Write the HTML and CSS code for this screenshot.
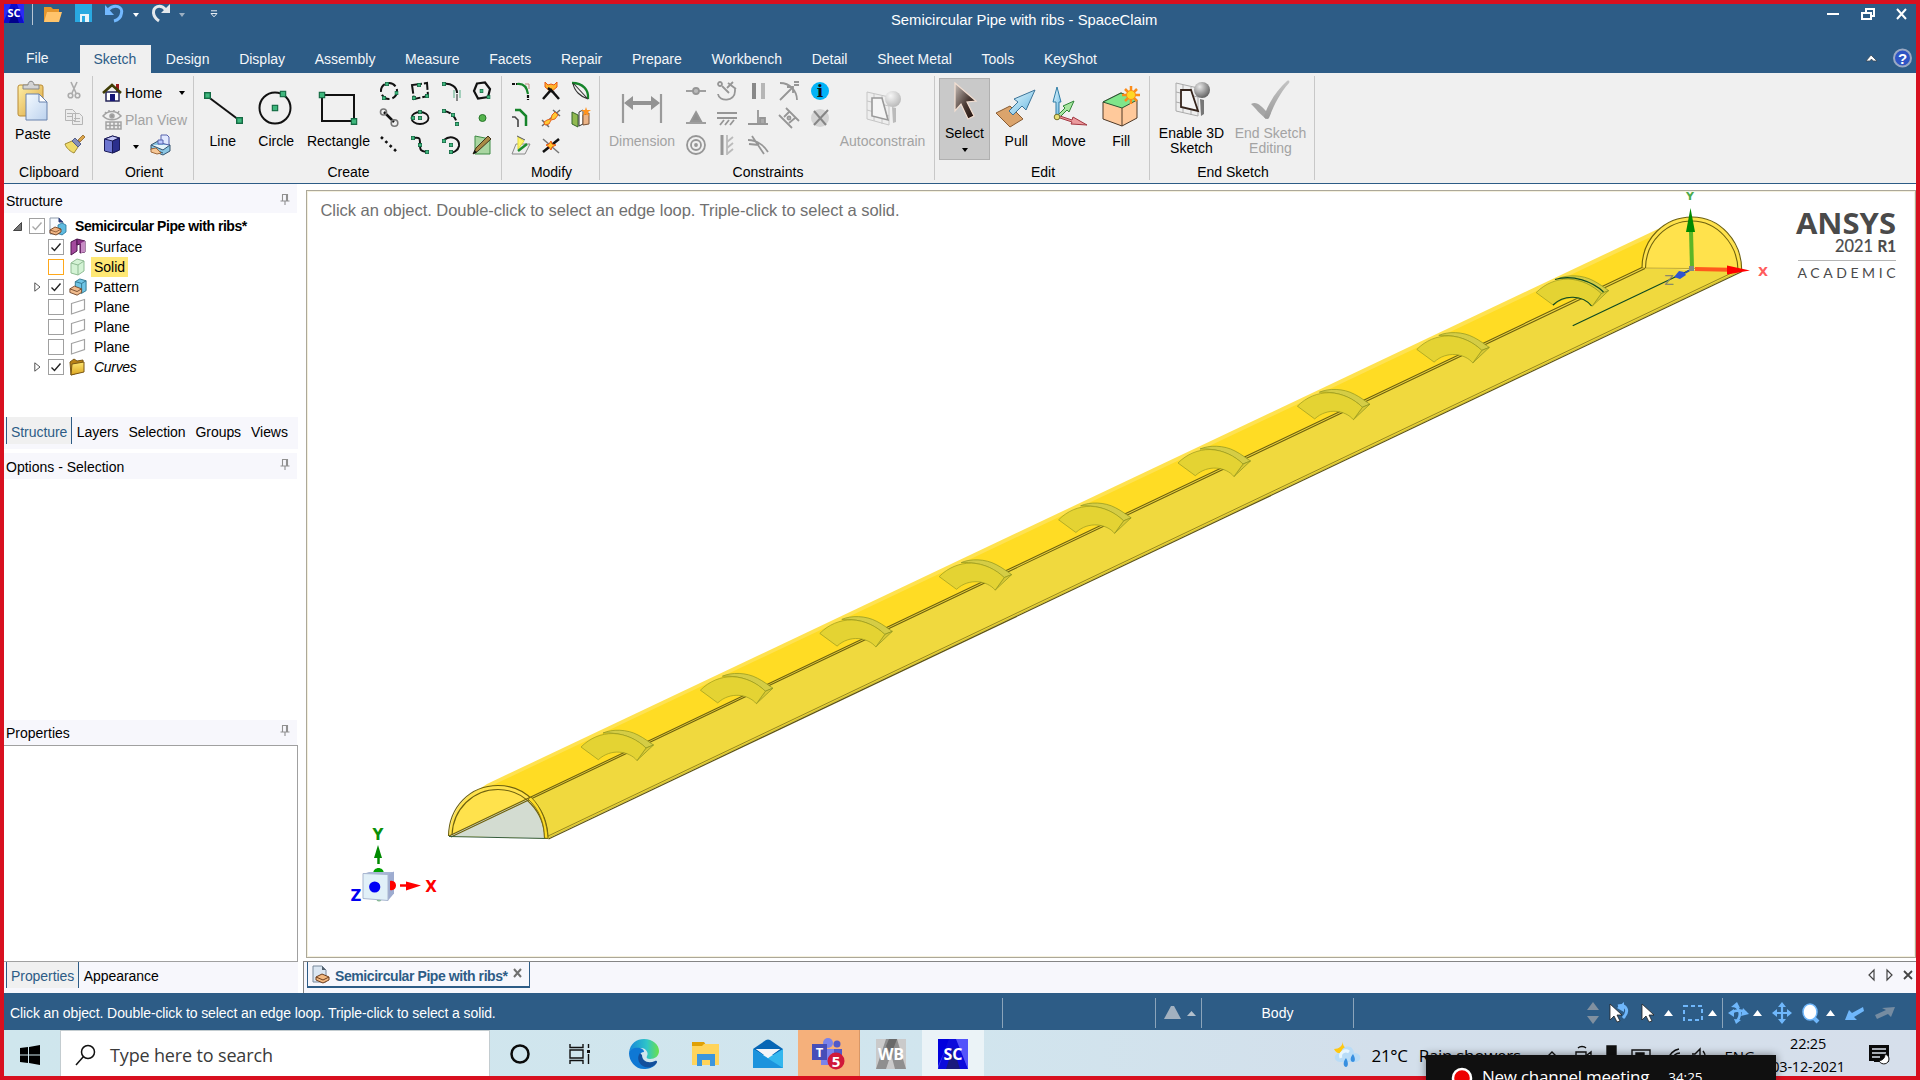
FILE: index.html
```html
<!DOCTYPE html>
<html lang="en">
<head>
<meta charset="utf-8">
<title>Semicircular Pipe with ribs - SpaceClaim</title>
<link rel="stylesheet" href="styles.css">
</head>
<body>
<svg class="sprite" width="0" height="0">
  <defs>
    <linearGradient id="gGold" x1="0" y1="0" x2="1" y2="1"><stop offset="0" stop-color="#fff0a8"/><stop offset="1" stop-color="#d9a23a"/></linearGradient>
    <linearGradient id="gPaper" x1="0" y1="0" x2="1" y2="1"><stop offset="0" stop-color="#f4faff"/><stop offset="1" stop-color="#bcd2ee"/></linearGradient>
    <linearGradient id="gFolder" x1="0" y1="0" x2="0" y2="1"><stop offset="0" stop-color="#ffe873"/><stop offset="1" stop-color="#dba520"/></linearGradient>
    <linearGradient id="gArrow" x1="0" y1="0" x2="1" y2="1"><stop offset="0" stop-color="#e8fbff"/><stop offset="1" stop-color="#63b4e0"/></linearGradient>
    <linearGradient id="gCursor" x1="0" y1="0" x2="1" y2="1"><stop offset="0" stop-color="#c9c0bb"/><stop offset=".55" stop-color="#4b3b35"/><stop offset="1" stop-color="#1c0a04"/></linearGradient>
    <radialGradient id="gBulb" cx=".35" cy=".3" r=".8"><stop offset="0" stop-color="#e8e8e8"/><stop offset="1" stop-color="#555"/></radialGradient>
    <radialGradient id="gBulbOff" cx=".35" cy=".3" r=".8"><stop offset="0" stop-color="#f6f6f6"/><stop offset="1" stop-color="#b4b4b4"/></radialGradient>
    <linearGradient id="gCheck" x1="0" y1="0" x2="0" y2="1"><stop offset="0" stop-color="#c4c4c4"/><stop offset="1" stop-color="#9a9a9a"/></linearGradient>
  </defs>
  <symbol id="part" viewBox="0 0 18 19">
    <path d="M1 1h9l4 4v12H1z" fill="#f7fbff" stroke="#8f9baa"/><path d="M10 1v4h4" fill="#2a3d7c" stroke="#2a3d7c"/>
    <path d="M9 8l4-2 4 2v7l-4 3-4-2z" fill="#5fbbe0" stroke="#24749b" stroke-width=".8"/>
    <path d="M1 13l5-3 6 2v3l-5 3-6-2z" fill="#f0b584" stroke="#6f3f1f" stroke-width=".9"/><path d="M1 13l6 2 5-3" fill="none" stroke="#6f3f1f" stroke-width=".7"/>
  </symbol>
  <symbol id="plane" viewBox="0 0 18 18"><path d="M2.500 5.500L15.500 1.500V11.500L2.500 16z" fill="#fff" stroke="#a2a2a2" stroke-width="1.200"/></symbol>
  <symbol id="pin" viewBox="0 0 10 12"><path d="M2 .5h5.500v6M2.500 .5v6M6.500 .5v6M.5 7h9M5 7v4" fill="none" stroke="#909090" stroke-width="1.100"/></symbol>
  <symbol id="rib" viewBox="-2 -20 80 40" overflow="visible">
    <path d="M22-14C31-18 46-18 57-12C63-9 68-5 72.500-2L65 1C55-8 42-15 22-14z" fill="#d5cd45" stroke="#8c9420" stroke-width=".7"/>
    <path d="M72.500-2L65 1L56 13.500z" fill="#d8c836" stroke="#8c9420" stroke-width=".7"/>
    <path d="M0 0C9-9 20-13.500 32-13.500C45-13 57-7 65 1L56 13.500C48 4 30 1 17.300 12.700z" fill="#e4d333" stroke="#9a9a20" stroke-width=".7"/>
  </symbol>
  <symbol id="check" viewBox="0 0 14 14"><path d="M2.500 7.500L5.500 10.500L11.500 3.500" fill="none" stroke="currentColor" stroke-width="1.400"/></symbol>
  <symbol id="dot" viewBox="0 0 4 4"><rect x=".4" y=".4" width="3.200" height="3.200" fill="#3fb77d" stroke="#146b44" stroke-width=".8"/></symbol>
</svg>

<div class="window">
  <header class="titlebar">
    <div class="quick">
      <svg class="app" width="20" height="19" viewBox="0 0 20 19"><path fill="#0d0dcc" d="M0 0h20v19H0z"/><path fill="#2a2af5" d="M0 0h7L0 17zM13 0h7v19z"/><path fill="#00008c" d="M10 3l5 16H5z"/><text x="10" y="13" class="logo-s">SC</text></svg>
      <i class="q-sep"></i>
      <svg class="folder" width="20" height="18" viewBox="0 0 20 18"><path d="M1 2h7l2 2h6v13H1z" fill="#e5962c"/><path d="M4 7h15l-3 10H1z" fill="#ffc46b"/></svg>
      <svg class="save" width="18" height="18" viewBox="0 0 18 18"><path d="M0 0h17v18H0z" fill="#29a9e1"/><path d="M5 10h9v8H5z" fill="#e8f4fa"/><path d="M7 12h3v6H7z" fill="#29a9e1"/></svg>
      <svg class="undo" width="20" height="19" viewBox="0 0 20 19"><path d="M3 6C10-1 18 3 16.500 9C16 13 13 16 9 17" fill="none" stroke="#73b9ff" stroke-width="3"/><path d="M0 1v10h9z" fill="#73b9ff"/></svg>
      <i class="caret white"></i>
      <svg class="redo" width="20" height="19" viewBox="0 0 20 19"><path d="M15 6C9-1 2 3 2.500 9C3 13 5 15 8 17" fill="none" stroke="#e4e8ec" stroke-width="3"/><path d="M19 0v9h-9z" fill="#e4e8ec"/></svg>
      <i class="caret dim"></i>
      <svg class="custom" width="8" height="8" viewBox="0 0 8 8"><path d="M1 .8h6M1 3.500h6L4 6.800z" fill="none" stroke="#e8eef4"/></svg>
    </div>
    <div class="title">Semicircular Pipe with ribs - SpaceClaim</div>
    <svg class="controls" width="84" height="16" viewBox="0 0 84 16" fill="none" stroke="#fff" stroke-width="2"><path d="M0 8h12"/><path d="M35 7h9v6h-9zM39 6V3h8v7h-3"/><path d="M70 3l9 10M79 3l-9 10"/></svg>
  </header>

  <nav class="tabs">
    <span class="file">File</span><span class="active">Sketch</span><span>Design</span><span>Display</span><span>Assembly</span><span>Measure</span><span>Facets</span><span>Repair</span><span>Prepare</span><span>Workbench</span><span>Detail</span><span>Sheet Metal</span><span>Tools</span><span>KeyShot</span>
    <svg class="help" width="50" height="22" viewBox="0 0 50 22"><path d="M2 14L7 8L13 14H9L7.500 12L6 14z" fill="#fff" stroke="#3b4754" stroke-width=".8"/><circle cx="38.500" cy="11" r="8.500" fill="#2f55c4" stroke="#9aa9c4" stroke-width="2"/><text x="38.500" y="16.500" class="qmark">?</text></svg>
  </nav>

  <section class="ribbon">
    <div class="group clip">
      <div class="body">
        <div class="big paste">
          <svg width="32" height="42" viewBox="0 0 32 42"><rect x="1" y="5" width="25" height="31" rx="2" fill="url(#gGold)" stroke="#b98a35"/><path d="M6 9V5h5c0-5 6-5 6 0h5v4z" fill="#d4d4d4" stroke="#888"/><path d="M9 14h13l8 8v18H9z" fill="url(#gPaper)" stroke="#6982ad"/><path d="M22 14v8h8z" fill="#fff" stroke="#6982ad"/></svg>
          <span>Paste</span>
        </div>
        <div class="stack">
          <svg width="20" height="20" viewBox="0 0 20 20" fill="none" stroke="#ababab" stroke-width="1.600"><path d="M7 2l5 11M13 2L8 13"/><circle cx="6.500" cy="15.500" r="2.300"/><circle cx="13.500" cy="15.500" r="2.300"/></svg>
          <svg width="20" height="20" viewBox="0 0 20 20" fill="#ececec" stroke="#b5b5b5"><path d="M1.500 2.500h7l3 3v8h-10zM8.500 6.500h7l3 3v8h-10zM10 11.500h6M10 14.500h6M3 6.500h5M3 9.500h5"/></svg>
          <svg width="22" height="20" viewBox="0 0 22 20"><path d="M1 10l7-3 6 6-4 6c-3-1-8-5-9-9z" fill="#efdc6a" stroke="#a08a35"/><path d="M8 7l3-3 6 6-3 3z" fill="#8590b8" stroke="#555f8a"/><path d="M14 6l5-5 2 2-5 5z" fill="#dca64b" stroke="#916427" stroke-width=".8"/></svg>
        </div>
      </div>
      <div class="label">Clipboard</div>
    </div>

    <div class="group orient">
      <div class="rows">
        <div><svg width="20" height="20" viewBox="0 0 20 20"><path d="M14 1h3v8h-3z" fill="#9b1b1b"/><path d="M4 9h13v9H4z" fill="#fff" stroke="#26265a" stroke-width="1.500"/><path d="M1 10L10 2l9 8" fill="none" stroke="#403d06" stroke-width="2.600"/><path d="M8 11h5v7H8z" fill="#151577"/></svg><span>Home</span><i class="caret black"></i></div>
        <div class="off"><svg width="20" height="20" viewBox="0 0 20 20" fill="none" stroke="#a2a2a2" stroke-width="1.500"><path d="M1 6c5-6 13-6 18 0-5 5-13 5-18 0zM3 2l1 1M7 0v2M12 0v2M17 1l-1 2"/><circle cx="10" cy="6" r="2" fill="#999"/><path d="M4 12h15v7H4zM4 15.500h15M8 12v7M12 12v7M16 12v7"/></svg><span>Plan View</span></div>
        <div class="third"><svg width="20" height="20" viewBox="0 0 20 20" stroke="#1b1b58"><path d="M2.500 4l8-3 7 2v12l-7 3-8-2z" fill="#6d76d0"/><path d="M2.500 4l8 2 7-3-7-2z" fill="#c3c7f6"/><path d="M10.500 6l7-3v12l-7 3z" fill="#2b2f8d"/></svg><i class="caret black"></i><svg width="22" height="22" viewBox="0 0 22 22" stroke="#35546f"><path d="M2 11l7-4 12 4v6l-7 4-12-5z" fill="#8bc6e4"/><path d="M2 11l12 5 7-5M2 14l12 5" fill="#e5f4fb"/><path d="M2 15l5-1 5 5-4 1-6-2z" fill="#f6c796" stroke="#a06a3c"/><path d="M12 1h6l2 2v8l-8-2z" fill="#e0e8ff" stroke="#5662ad"/><path d="M9 6h5v4H9z" fill="#bccaff" stroke="#5662ad"/></svg></div>
      </div>
      <div class="label">Orient</div>
    </div>

    <div class="group create">
      <div class="body">
        <div class="big low w54"><svg width="42" height="38" viewBox="0 0 42 38"><path d="M5 7l32 24" stroke="#111" stroke-width="2"/><use href="#dot" x="2" y="3" width="7" height="7"/><use href="#dot" x="34" y="28" width="7" height="7"/></svg><span>Line</span></div>
        <div class="big low w54"><svg width="42" height="38" viewBox="0 0 42 38"><circle cx="20" cy="19" r="15.500" fill="none" stroke="#111" stroke-width="2"/><use href="#dot" x="16.500" y="15.500" width="7" height="7"/><use href="#dot" x="24.500" y="1.500" width="7" height="7"/></svg><span>Circle</span></div>
        <div class="big low w70"><svg width="42" height="38" viewBox="0 0 42 38"><path d="M4 6h32v26H4z" fill="none" stroke="#111" stroke-width="2"/><use href="#dot" x=".5" y="2.500" width="7" height="7"/><use href="#dot" x="32.500" y="29" width="7" height="7"/></svg><span>Rectangle</span></div>
        <div class="grid c4">
          <svg viewBox="0 0 20 20"><circle cx="10" cy="10" r="8" fill="none" stroke="#111" stroke-width="2" stroke-dasharray="9 3"/><use href="#dot" x="6" y="1" width="4" height="4"/><use href="#dot" x="15.500" y="10" width="4" height="4"/><use href="#dot" x="3" y="15" width="4" height="4"/></svg>
          <svg viewBox="0 0 20 20"><path d="M2 4l15-2 1 13-14 3z" fill="none" stroke="#111" stroke-width="2" stroke-dasharray="10 2"/><use href="#dot" x="7" y="2" width="4" height="4"/><use href="#dot" x="15" y="13" width="4" height="4"/><use href="#dot" x="2" y="15" width="4" height="4"/></svg>
          <svg viewBox="0 0 20 20"><path d="M3 3c7-1 13 3 13 9" fill="none" stroke="#111" stroke-width="2"/><path d="M13 9v8M19 9v8" stroke="#58ae87"/><path d="M16 13v7" stroke="#888" stroke-width="2"/><use href="#dot" x="1" y="1" width="4" height="4"/></svg>
          <svg viewBox="0 0 20 20"><path d="M5 2.500L13 1.500L18 8L16 16L6 17.500L2 10z" fill="none" stroke="#111" stroke-width="2.200"/><use href="#dot" x="7.500" y="8" width="4" height="4"/><use href="#dot" x="14.500" y="14" width="4" height="4"/></svg>
          <svg viewBox="0 0 20 20"><path d="M5 4l10 10" stroke="#111" stroke-width="2.500"/><circle cx="4.500" cy="4" r="3" fill="none" stroke="#777" stroke-width="1.600"/><circle cx="15.500" cy="15" r="3.300" fill="none" stroke="#777" stroke-width="1.600"/></svg>
          <svg viewBox="0 0 20 20"><ellipse cx="10" cy="10" rx="8.500" ry="6" fill="none" stroke="#111" stroke-width="1.800"/><use href="#dot" x="8" y="8" width="4" height="4"/><use href="#dot" x="8" y="2" width="4" height="4"/><use href="#dot" x="1" y="8" width="4" height="4"/></svg>
          <svg viewBox="0 0 20 20"><path d="M3 3c7 1 12 6 13 13" fill="none" stroke="#111" stroke-width="2" stroke-dasharray="7 2"/><use href="#dot" x="1" y="1" width="4" height="4"/><use href="#dot" x="10" y="5" width="4" height="4"/><use href="#dot" x="14" y="14" width="4" height="4"/></svg>
          <svg viewBox="0 0 20 20"><circle cx="10.500" cy="10" r="3.500" fill="#55b44d" stroke="#277729"/></svg>
          <svg viewBox="0 0 20 20"><path d="M2 2l16 15" stroke="#111" stroke-width="2.600" stroke-dasharray="2.600 3.400"/></svg>
          <svg viewBox="0 0 20 20"><path d="M3 3c7-1 7 0 7 6s0 7 7 8" fill="none" stroke="#111" stroke-width="2"/><use href="#dot" x="1" y="1" width="4" height="4"/><use href="#dot" x="8" y="8" width="4" height="4"/><use href="#dot" x="15" y="15" width="4" height="4"/></svg>
          <svg viewBox="0 0 20 20"><path d="M3 5c7-6 16-1 15 6-1 5-6 7-9 6" fill="none" stroke="#111" stroke-width="2"/><use href="#dot" x="1" y="4" width="4" height="4"/><use href="#dot" x="8" y="8" width="4" height="4"/><use href="#dot" x="8" y="15" width="4" height="4"/></svg>
          <svg viewBox="0 0 20 20"><path d="M3 1l15 3v15H3z" fill="#a9d6a1" stroke="#3e8b45"/><path d="M16 1l3 3L6 16l-5 3 3-6z" fill="#a98a45" stroke="#43351d"/><path d="M1 19l1.500-4 2.500 2.500z" fill="#111"/></svg>
        </div>
      </div>
      <div class="label">Create</div>
    </div>

    <div class="group modify">
      <div class="grid c3">
        <svg viewBox="0 0 20 20" fill="none"><path d="M1 3h5" stroke="#111" stroke-width="2" stroke-dasharray="3 1"/><path d="M6 3c7-1 10 4 11 10" stroke="#15842a" stroke-width="2.200"/><path d="M17 14v5" stroke="#111" stroke-width="2.200" stroke-dasharray="3 1"/><path d="M14 3h4v5" stroke="#c08a80"/></svg>
        <svg viewBox="0 0 20 20"><path d="M4 1l3 3 3-1 3 1 3-3v5l-6 5-6-5z" fill="#ffb52b" stroke="#ea5815"/><path d="M2 18L10 9l8 9M7 7l6 5" fill="none" stroke="#111" stroke-width="2.500"/></svg>
        <svg viewBox="0 0 20 20" fill="none"><path d="M1 2c11 0 17 7 16 16" stroke="#15842a" stroke-width="2.300"/><path d="M2 2c1 8 8 14 15 16M3 3l13 14" stroke="#333" stroke-width="1.100"/></svg>
        <svg viewBox="0 0 20 20" fill="none"><path d="M1 9h3l3 3v7" stroke="#444" stroke-width="1.600"/><path d="M4 2h5l6 6v10" stroke="#15842a" stroke-width="2.500"/></svg>
        <svg viewBox="0 0 20 20"><path d="M1 18L19 2M1 12l7 7M12 2l7 6" stroke="#6b6b6b" stroke-width="1.500"/><path d="M3 14l3-2 4-1 1-4 3-3 3 3-3 4-4 1-2 4-4 1z" fill="#ffca35" stroke="#e8641c"/></svg>
        <svg viewBox="0 0 20 20"><path d="M1 4l6 3v12l-6-3z" fill="#91b950" stroke="#35642a"/><path d="M8 4l4-2v14l-4 2z" fill="#fff" stroke="#333"/><path d="M12 7l6-2v11l-6 1z" fill="#ecb487" stroke="#7a5438"/><path d="M15-1l1 3h4l-3 2 1 4-3-2-3 2 1-4-3-2h4z" fill="#ff931e"/></svg>
        <svg viewBox="0 0 20 20"><path d="M5 9h14l-5 10H1z" fill="#eee" stroke="#888"/><path d="M7 2v12l6-8z" fill="#fff46a" stroke="#e3dc36"/><path d="M6 1l8 4" stroke="#555"/><path d="M7 16l9-7" stroke="#1c8d2e" stroke-width="2.500"/></svg>
        <svg viewBox="0 0 20 20"><path d="M2 4l16 14" stroke="#777" stroke-width="1.500"/><path d="M2 17L18 4" stroke="#111" stroke-width="2.500"/><path d="M10 6l1 3 4 1-4 2-1 3-2-3-3-2 3-1z" fill="#ffc62c" stroke="#eb5a16"/></svg>
      </div>
      <div class="label">Modify</div>
    </div>

    <div class="group constraints">
      <div class="body off">
        <div class="big low w66"><svg width="42" height="38" viewBox="0 0 42 38"><path d="M2 5v29M40 5v29" stroke="#9a9a9a" stroke-width="2.200"/><path d="M3 14l9-7v5h18V7l9 7-9 7v-5H12v5z" fill="#939393"/></svg><span>Dimension</span></div>
        <div class="grid c5">
          <svg viewBox="0 0 20 20" class="ln"><path d="M0 10h20"/><circle cx="10" cy="10" r="3" fill="#bbb"/></svg>
          <svg viewBox="0 0 20 20" class="ln"><circle cx="3" cy="3" r="2"/><path d="M5 5l7 7M16 1l-6 6M11 2l8 6M1 13c1 8 17 8 17-3v-2"/></svg>
          <svg viewBox="0 0 20 20"><path d="M6 2v16" stroke="#888" stroke-width="4"/><path d="M15 2v16" stroke="#b6b6b6" stroke-width="4"/></svg>
          <svg viewBox="0 0 20 20" class="ln"><path d="M1 2c10 0 17 8 17 17M1 19L14 6M8 6h6v6M15 1h5M15 4h5"/></svg>
          <svg viewBox="0 0 20 20"><circle cx="10" cy="10" r="9" fill="#02b3f7"/><text x="10" y="16" class="info">i</text></svg>
          <svg viewBox="0 0 20 20" class="ln"><path d="M0 15h20"/><path d="M10 4l5 9H5z" fill="#8f8f8f"/></svg>
          <svg viewBox="0 0 20 20" class="ln"><path d="M0 5h20M0 10h20M7 12l-4 5M12 12l-4 5M17 12l-4 5"/></svg>
          <svg viewBox="0 0 20 20" class="ln"><path d="M10 2v14M0 16h20"/><path d="M12 10h5v6h-5z" fill="#aaa"/></svg>
          <svg viewBox="0 0 20 20" class="ln"><path d="M7 0l13 13M0 7l13 13M5 9l5-5M10 15l6-5"/><circle cx="10" cy="10" r="1.500"/></svg>
          <svg viewBox="0 0 20 20"><circle cx="10" cy="10" r="9" fill="#d3d3d3"/><path d="M4 3l12 14M18 2L4 17" stroke="#858585" stroke-width="2"/></svg>
          <svg viewBox="0 0 20 20" class="ln"><circle cx="10" cy="10" r="9"/><circle cx="10" cy="10" r="5"/><circle cx="10" cy="10" r="1"/></svg>
          <svg viewBox="0 0 20 20" class="ln"><path d="M5 0v20" stroke-width="3"/><path d="M10 0v20M16 2l-6 5M16 8l-6 5M16 14l-6 5" stroke="#bbb"/></svg>
          <svg viewBox="0 0 20 20" class="ln"><path d="M0 5c10 0 17 7 20 12M4 1l12 18M1 9l10 1"/></svg>
        </div>
        <div class="big low w84"><svg width="42" height="38" viewBox="0 0 42 38"><path d="M5 3l22 5v28L5 30zM5 12l22 5M5 21l22 6M12 5v27M20 7v28" fill="#eee" stroke="#c6c6c6"/><path d="M10 9h10l6 22-16-4z" fill="#f5f5f5" stroke="#999" stroke-width="1.600"/><path d="M30 18l4 1v14l-3 1z" fill="#bbb"/><circle cx="31" cy="10" r="8" fill="url(#gBulbOff)"/></svg><span>Autoconstrain</span></div>
      </div>
      <div class="label">Constraints</div>
    </div>

    <div class="group edit">
      <div class="body">
        <div class="big select"><svg width="30" height="40" viewBox="0 0 30 40"><path d="M5 1l21 18-9 1 7 14-6 3-7-15-6 7z" fill="url(#gCursor)" stroke="#f3dfd2" stroke-width="1.200"/></svg><span>Select</span><i class="caret black"></i></div>
        <div class="big low w52"><svg width="42" height="40" viewBox="0 0 42 40"><path d="M1 25l14-7 13 13-13 8z" fill="#dba46c" stroke="#885b31"/><path d="M40 2L31 22l-4-4-9 9-4-4 9-9-4-3z" fill="url(#gArrow)" stroke="#3d7498"/></svg><span>Pull</span></div>
        <div class="big low w52"><svg width="42" height="40" viewBox="0 0 42 40"><path d="M8 28V14H5l4-15 4 15h-2v14" fill="url(#gArrow)" stroke="#2f7da6"/><path d="M11 26l6-6-2-2 11-5-5 11-2-2-6 6" fill="#a7e6a0" stroke="#308538"/><path d="M12 28l12 4 1-3 14 8-16-1 1-2-12-4" fill="#eb9a9d" stroke="#a33842"/><circle cx="9" cy="29" r="2.800" fill="#e8df75" stroke="#75702b"/></svg><span>Move</span></div>
        <div class="big low w52"><svg width="42" height="40" viewBox="0 0 42 40"><path d="M3 14l18-9 16 7v18l-15 8-19-7z" fill="#ffc99b" stroke="#4e3927"/><path d="M3 14l18-9 16 7-15 8z" fill="#7fe58a" stroke="#285634"/><path d="M22 20v18" stroke="#4e3927"/><path d="M31-2v18M22 7h18M25 1l12 12M37 1L25 13" stroke="#fb8c19" stroke-width="2.500"/><circle cx="31" cy="7" r="4.500" fill="#ffd725" stroke="#fb8c19"/></svg><span>Fill</span></div>
      </div>
      <div class="label">Edit</div>
    </div>

    <div class="group ends">
      <div class="body">
        <div class="big two w80"><svg width="42" height="40" viewBox="0 0 42 40"><path d="M5 2l22 5v28L5 30zM5 11l22 5M5 21l22 5M12 4v28M20 6v28" fill="#eee" stroke="#aaa"/><path d="M10 9h10l7 21-17-4z" fill="#f5f5f5" stroke="#35241b" stroke-width="1.800"/><path d="M29 18l4 1v14l-3 2z" fill="#777"/><circle cx="31" cy="9" r="8" fill="url(#gBulb)"/></svg><span>Enable 3D<br>Sketch</span></div>
        <div class="big two w80 off"><svg width="42" height="42" viewBox="0 0 42 42"><path d="M1 24c6-3 10 2 16 8l-1 7C9 33 6 29 1 24z" fill="#a6a6a6"/><path d="M14 36C19 22 27 10 37 1c2-1 3 0 2 2C30 13 24 25 19 38c-1 2-5 1-5-2z" fill="url(#gCheck)"/></svg><span>End Sketch<br>Editing</span></div>
      </div>
      <div class="label">End Sketch</div>
    </div>
  </section>

  <main class="work">
    <aside class="left">
      <div class="head first"><span>Structure</span><svg width="10" height="12"><use href="#pin"/></svg></div>
      <ul class="tree">
        <li class="root"><svg class="exp" width="9" height="9" viewBox="0 0 9 9"><path d="M8.500 .5v8h-8z" fill="#777" stroke="#444"/></svg><b class="box soft"><svg width="14" height="14"><use href="#check"/></svg></b><svg width="18" height="19"><use href="#part"/></svg><span>Semicircular Pipe with ribs*</span></li>
        <li><i class="exp"></i><b class="box"><svg width="14" height="14"><use href="#check"/></svg></b><svg width="18" height="18" viewBox="0 0 18 18"><path d="M2 4l6-3v12l-6 4z" fill="#a44a9d" stroke="#4e174e"/><path d="M8 1l8 2v11l-5 1V6l-3 1z" fill="#8a3287" stroke="#4e174e"/><path d="M12 5l4-2v11l-4 1z" fill="#c78cc4"/></svg><span>Surface</span></li>
        <li><i class="exp"></i><b class="box hot"></b><svg width="18" height="18" viewBox="0 0 18 18"><path d="M2 5l6-4 7 2v10l-6 4-7-2z" fill="#d4f3d5" stroke="#8fbc93"/><path d="M2 5l7 2 6-4M9 7v10" fill="none" stroke="#8fbc93"/></svg><span class="sel">Solid</span></li>
        <li><svg class="exp" width="7" height="10" viewBox="0 0 7 10"><path d="M.8 .8L6 5L.8 9.200z" fill="#fff" stroke="#555"/></svg><b class="box"><svg width="14" height="14"><use href="#check"/></svg></b><svg width="20" height="19" viewBox="0 0 20 19"><path d="M7 3l5-3 7 2v11l-5 3-7-3z" fill="#6fc5e6" stroke="#2b738c"/><path d="M7 3l7 2 5-3M14 5v11" fill="none" stroke="#2b738c"/><path d="M1 11l5-3 8 3v4l-5 3-8-3z" fill="#f1bc8e" stroke="#70462a"/><path d="M1 11l8 3 5-3" fill="none" stroke="#70462a"/></svg><span>Pattern</span></li>
        <li><i class="exp"></i><b class="box"></b><svg width="18" height="18"><use href="#plane"/></svg><span>Plane</span></li>
        <li><i class="exp"></i><b class="box"></b><svg width="18" height="18"><use href="#plane"/></svg><span>Plane</span></li>
        <li><i class="exp"></i><b class="box"></b><svg width="18" height="18"><use href="#plane"/></svg><span>Plane</span></li>
        <li class="last"><svg class="exp" width="7" height="10" viewBox="0 0 7 10"><path d="M.8 .8L6 5L.8 9.200z" fill="#fff" stroke="#555"/></svg><b class="box"><svg width="14" height="14"><use href="#check"/></svg></b><svg width="18" height="18" viewBox="0 0 18 18"><path d="M1 4l4-3 3 2 6-1v11L2 17z" fill="#b98215" stroke="#7a5714"/><path d="M3 6l12-2v10L2 17z" fill="url(#gFolder)" stroke="#7a5714"/></svg><span class="it">Curves</span></li>
      </ul>
      <div class="ptabs"><span class="on">Structure</span><span>Layers</span><span>Selection</span><span>Groups</span><span>Views</span></div>
      <div class="head opt"><span>Options - Selection</span><svg width="10" height="12"><use href="#pin"/></svg></div>
      <div class="blank"></div>
      <div class="head"><span>Properties</span><svg width="10" height="12"><use href="#pin"/></svg></div>
      <div class="props"></div>
      <div class="ptabs bottom"><span class="on">Properties</span><span>Appearance</span></div>
    </aside>

    <section class="doc">
      <div class="view">
        <svg width="1608" height="765" viewBox="306 191 1608 765">
          <text x="319.500" y="216" class="hint" textLength="579">Click an object. Double-click to select an edge loop. Triple-click to select a solid.</text>
          <path d="M474 792L486 784L1657 229L1680 222L1641 268L448 836z" fill="#ffe250"/>
          <path d="M474 796L492 785L1658 233L1680 224L1641 268L448 836z" fill="#ffdc24"/>
          <path d="M448 836L1641 268L1741 271L547 838.500z" fill="#f0d93e"/>
          <path d="M448 836C449 807 470 785.500 497 785.500C526 785.500 546 809 547 838.500z" fill="#ffe24c"/>
          <path d="M448 836L526 799.500C538 809 543.500 823 543.500 838.500z" fill="#d3dcd1"/>
          <path d="M1641 268C1642 238 1664 217 1691 217C1719 217 1740 241 1740.700 271L1735 269z" fill="#ffe24c"/>
          <path d="M1641 268l95 1" stroke="#c1a825"/>
          <g fill="none" stroke="#6e610e" stroke-width="1.100">
            <path d="M448 836L1641 267.500M450 837L1644 268.500"/>
            <path d="M447.500 836C448 807 469 785.500 497 785.500C526 785.500 546.500 809 547 838.500M451 835C452 809 472 789.500 497 789.500C523 789.500 543.500 812 543.500 838"/>
            <path d="M1641 268C1641 238 1664 217 1691 217C1719 217 1740.500 241 1740.700 270M1644.500 268C1645 241 1666 221 1691 221C1716 221 1736.500 244 1737 270"/>
            <path d="M448 836.500L547 838.500" stroke="#355d3e"/>
          </g>
          <path d="M546 836.500L1738 269.500" stroke="#8a7d18" stroke-width=".9"/>
          <path d="M546.500 838L1740 270.500" stroke="#d8c52f" stroke-width="1"/>
          <path d="M547.500 839L1741 271.500" stroke="#5f5510" stroke-width="1.200"/>
          <path d="M527 799C538 809 543.500 823 543.500 838L547 838.500C546 823 541 808 530 797z" fill="#ffdc24" stroke="#6e610e" stroke-width=".8"/>
          <g>
            <use href="#rib" x="578" y="727" width="80" height="40"/><use href="#rib" x="697.400" y="670.200" width="80" height="40"/><use href="#rib" x="816.800" y="613.400" width="80" height="40"/><use href="#rib" x="936.200" y="556.600" width="80" height="40"/><use href="#rib" x="1055.600" y="499.800" width="80" height="40"/><use href="#rib" x="1175" y="443" width="80" height="40"/><use href="#rib" x="1294.400" y="386.200" width="80" height="40"/><use href="#rib" x="1413.800" y="329.400" width="80" height="40"/><use href="#rib" x="1533.200" y="272.600" width="80" height="40"/>
          </g>
          <g fill="none" stroke="#0d4a22" stroke-width="1.200"><path d="M1554 279.500C1572 274 1592 282 1602.500 292M1552 305C1563 294 1582 295 1590.500 306M1571.700 325.700L1691 269"/></g>
          <path d="M1691 268l-1-37" stroke="#5cb527" stroke-width="4"/><path d="M1689.500 208l4.500 24h-9z" fill="#008a00"/>
          <path d="M1694 269l34 .8" stroke="#ff5a1d" stroke-width="4"/><path d="M1726 265.500l23 5-23 4z" fill="#f00"/>
          <path d="M1673 277l5-6 5 1 2 3-6 4z" fill="#2f55cf"/><path d="M1684 273l5-3" stroke="#3556a0" stroke-width="2"/>
          <path d="M1688 266h5v5h-5z" fill="#7d8a87"/>
          <text x="1689" y="199.500" class="ax small" fill="#4cac4c">Y</text><text x="1762" y="276" class="ax mid" fill="#ff5c5c">X</text><text x="1668" y="285" class="axz" fill="#8c8a68">Z</text>
          <text x="377" y="840" class="ax" fill="#0a900a">Y</text><text x="430" y="892" class="ax" fill="#f00">X</text><text x="355" y="901" class="ax" fill="#0000f0">Z</text>
          <path d="M377 845l4 13h-8z" fill="#008a00"/><path d="M377.500 857v7" stroke="#008a00" stroke-width="2.500"/>
          <path d="M372 874c0-8 11-8 11 0z" fill="#00a000"/><circle cx="378" cy="899" r="2.500" fill="#7fb98a"/>
          <path d="M362 874l6-2h25l-6 3z" fill="#a7b7d6"/><path d="M387 874.500l6-3v22l-6 7z" fill="#9eacd0"/><path d="M362 873.500l25 1v26l-25-2z" fill="#e1f0f8" stroke="#a9b6d0"/>
          <circle cx="373.700" cy="887" r="5.600" fill="#0000f5"/><path d="M389 881c8-2 8 11 0 9z" fill="#f00"/><path d="M399 885.500h8" stroke="#f00" stroke-width="2.500"/><path d="M405 881.500l15 4-15 5z" fill="#f00"/>
          <text x="1795" y="233.500" class="brand" textLength="100" lengthAdjust="spacingAndGlyphs">ANSYS</text>
          <text x="1834" y="251.500" class="rel" textLength="38" lengthAdjust="spacingAndGlyphs">2021</text>
          <text x="1876.500" y="251.500" class="rel strong" textLength="18.500" lengthAdjust="spacingAndGlyphs">R1</text>
          <path d="M1797 260.500h98" stroke="#b5b5b5"/>
          <text x="1796.500" y="278" class="acad" textLength="101">ACADEMIC</text>
        </svg>
      </div>
      <div class="doctabs">
        <div class="doctab"><svg width="18" height="19" viewBox="0 0 18 19"><path d="M1 1h9l4 4v12H1z" fill="#dbe6f2" stroke="#78889a"/><path d="M10 1v4h4" fill="#52606e"/><path d="M4 12l6-3 7 3v3l-6 3-7-3z" fill="#f3b981" stroke="#6f3f1f"/><path d="M4 12l7 3 6-3" fill="none" stroke="#6f3f1f"/></svg><span>Semicircular Pipe with ribs*</span><svg width="10" height="10" viewBox="0 0 10 10"><path d="M1 0l7 8M8 0L1 8" stroke="#707070" stroke-width="2"/></svg></div>
        <svg class="nav" width="48" height="14" viewBox="0 0 48 14" fill="none" stroke="#444" stroke-width="1.200"><path d="M6 2L1 7l5 5zM19 2l5 5-5 5z"/><path d="M36 3l8 8M44 3l-8 8" stroke-width="1.800"/></svg>
      </div>
    </section>
  </main>

  <footer class="status">
    <div class="s-msg">Click an object. Double-click to select an edge loop. Triple-click to select a solid.</div>
    <div class="s-a"></div>
    <div class="s-b"><svg width="17" height="14" viewBox="0 0 17 14"><path d="M7 0h3l7 13H0z" fill="#a2b1c0"/></svg><svg width="9" height="5" viewBox="0 0 9 5"><path d="M4.500 0L9 5H0z" fill="#b3c0cc"/></svg></div>
    <div class="s-c">Body</div>
    <svg class="s-tools" width="320" height="30" viewBox="1585 998 320 30">
      <path d="M1593 1002l6 8h-12zM1593 1024l6-8h-12z" fill="#8090a0"/>
      <path d="M1618 1006c8-2 12 5 5 12" fill="none" stroke="#6fb7fb" stroke-width="3"/><path d="M1617 1008l7-6v10z" fill="#6fb7fb"/>
      <g fill="#fff" stroke="#222" stroke-width=".8"><path d="M1610 1004v16l4-4 3 6 3-1-3-6h5z"/><path d="M1642 1004v16l4-4 3 6 3-1-3-6h5z"/></g>
      <g fill="#fff"><path d="M1664 1016h9l-4.500-6zM1708 1016h9l-4.500-6zM1753 1016h9l-4.500-6zM1826 1016h9l-4.500-6z"/></g>
      <path d="M1684 1006h18v14h-18z" fill="none" stroke="#6fb7fb" stroke-width="2" stroke-dasharray="4 3"/>
      <path d="M1722.500 998v30" stroke="#8ba4ba"/>
      <g fill="none" stroke="#6fb7fb" stroke-width="2.600"><path d="M1735 1006c6 4 6 10 2 15M1731 1013c6-4 11-3 15 0"/><path d="M1782 1004v18M1773 1013h18" stroke-width="2.200"/></g>
      <path d="M1731 1007l6-5 3 6zM1743 1008l6 6-8 2zM1728 1013l6-4v8zM1734 1019l7 1-5 4zM1782 1002l4 5h-8zM1782 1024l4-5h-8zM1772 1013l5-4v8zM1792 1013l-5-4v8z" fill="#6fb7fb"/>
      <path d="M1813 1017l5 5" stroke="#6fb7fb" stroke-width="4"/><ellipse cx="1810" cy="1012" rx="7" ry="8" fill="#fff" stroke="#6fb7fb" stroke-width="1.500"/>
      <path d="M1845 1020l4-10 3 3 11-6 1 4-10 6 3 3z" fill="#6fb7fb"/><path d="M1895 1007l-4 10-3-3-11 5-2-4 11-5-4-2z" fill="#768ca1"/>
    </svg>
  </footer>

  <div class="taskbar">
    <div class="start"><svg width="20" height="20" viewBox="0 0 20 20"><path d="M0 3l8-1v7.500H0zM9 2l11-2v9.500H9zM0 10.500h8V18l-8-1zM9 10.500h11V20L9 18z"/></svg></div>
    <div class="search"><svg width="22" height="22" viewBox="0 0 22 22" fill="none" stroke="#111" stroke-width="1.500"><circle cx="13" cy="8" r="6.500"/><path d="M8.500 12.500L1 21"/></svg><span>Type here to search</span></div>
    <div class="tb w61"><svg width="22" height="22" viewBox="0 0 22 22"><circle cx="10" cy="11" r="8.500" fill="none" stroke="#0a0a0a" stroke-width="2.500"/></svg></div>
    <div class="tb w61 tview"><svg width="22" height="20" viewBox="0 0 22 20" fill="none" stroke="#111" stroke-width="1.400"><path d="M1 0v3.500h13V0M1 6h13v8H1zM1 20v-3.500h13V20M19.500 0v4M19.500 10v10"/><path d="M18 6h3v3h-3z" fill="#111" stroke="none"/></svg></div>
    <div class="tb w61"><svg width="30" height="30" viewBox="0 0 30 30"><defs><linearGradient id="e1" x1="0" x2="1"><stop offset="0" stop-color="#1686d9"/><stop offset=".6" stop-color="#2fc5c9"/><stop offset="1" stop-color="#6be14a"/></linearGradient></defs><path d="M0 14C1 4 8 0 15 0c9 0 15 6 15 12 0 5-4 8-9 8-3 0-4-1-3-3 2-3-1-8-6-8C6 9 1 11 0 14z" fill="url(#e1)"/><path d="M0 14c1-4 6-6 11-5 3 1 4 2 4 4-5 0-6 6-3 10 3 5 9 6 15 2-3 4-8 5-12 5C6 30 0 22 0 14z" fill="#0f78d4"/><path d="M11 14c-4 5-1 12 5 14 4 1 8 0 11-3 2-2 1-4-1-3-7 3-13 0-13-6z" fill="#124f9c"/></svg></div>
    <div class="tb w61"><svg width="28" height="24" viewBox="0 0 28 24"><path d="M0 0h12l2 3v5H0z" fill="#e0a106"/><path d="M0 4h10l2-2h15v21H0z" fill="#ffd45b"/><path d="M5 12h18v12h-5v-6h-8v6H5z" fill="#3c96dd"/></svg></div>
    <div class="tb w61"><svg width="30" height="30" viewBox="0 0 30 30"><path d="M0 10L13 1q2-1 4 0l13 9v6H0z" fill="#0766b5"/><path d="M0 10l15 9 15-9v19H0z" fill="#33b7ee"/><path d="M3 10h24L15 18z" fill="#f3f5f8"/><path d="M0 10l30 19H0z" fill="#1b93dd"/><path d="M3 10h24L15 19z" fill="#f3f5f8"/></svg></div>
    <div class="tb w61 teams"><svg width="34" height="32" viewBox="0 0 34 32"><circle cx="16" cy="5" r="5" fill="#7b83eb"/><circle cx="25" cy="6" r="3.500" fill="#5059c9"/><path d="M9 11h14v16H9z" fill="#7b83eb"/><path d="M22 11h8v10h-8z" fill="#5059c9"/><path d="M0 6h15v16H0z" fill="#464eb8"/><text x="7.500" y="19" class="tt">T</text><circle cx="24" cy="23" r="8.500" fill="#d0183a"/><text x="24" y="28.500" class="tn">5</text></svg></div>
    <div class="tb w61"><svg width="30" height="30" viewBox="0 0 30 30"><path d="M0 0h30v30H0z" fill="#cacaca"/><path d="M10 0h11l9 30H19L15 15 10 30H0z" fill="#8f8f8f"/><path d="M13 0h8l-6 16-5-9z" fill="#696969"/><text x="15" y="21" class="lg">WB</text></svg></div>
    <div class="tb w61 cur"><svg width="30" height="30" viewBox="0 0 30 30"><path d="M0 0h30v30H0z" fill="#3d3df5"/><path d="M0 0h12L0 27z" fill="#0000dd"/><path d="M11 0h8l11 30H0z" fill="#0c0cdb"/><path d="M15 8l7 22H8z" fill="#1a1a7d"/><path d="M18 0h12v30z" fill="#5454fb"/><text x="15" y="21" class="lg">SC</text></svg></div>
    <div class="weather"><svg width="28" height="28" viewBox="0 0 28 28"><path d="M10 0c-1 7 3 9 7 8-3 6-13 8-16 1 5 0 9-3 9-9z" fill="#ffc711"/><path d="M7 22c-8-1-6-10 1-9 1-8 12-9 13 0 8 0 8 8 2 9z" fill="#b9dcf7"/><path d="M8 18c-2-5 4-9 8-6" fill="none" stroke="#e8f6ff" stroke-width="3"/><path d="M13 18c3 5 2 9 0 9s-4-4 0-9zM20 14c3 5 2 8 0 8s-4-3 0-8z" fill="#378fe0"/></svg><span>21°C</span><span>Rain showers</span></div>
    <svg class="tray" width="160" height="24" viewBox="1545 1044 160 24" fill="none" stroke="#111" stroke-width="1.400"><path d="M1546 1058l6-6 6 6M1576 1052h10v8h-10zM1578 1048c2-2 6-2 8 0M1587 1055l4-3v8M1632 1050h18v9h-18z"/><path d="M1607 1046h9v14h-9zM1636 1053h8v6h-8z" fill="#111"/><path d="M1668 1060c1-6 6-10 11-11M1672 1060c1-4 4-7 8-7M1692 1054h3l5-5v12M1703 1051c3 4 3 6 0 9"/></svg>
    <span class="eng">ENG</span>
    <div class="clock"><span>22:25</span><span>03-12-2021</span></div>
    <svg class="notice" width="22" height="22" viewBox="0 0 22 22"><path d="M1 1h20v17H6v-1H1z" fill="#0a0a0a"/><path d="M4 5h14M4 9h14M4 13h8" stroke="#dce4ed" stroke-width="1.500"/><path d="M17 10c0 4-2 6-6 7 3 5 10 3 10-2 0-3-2-4-4-5z" fill="#fff" stroke="#111"/></svg>
  </div>
</div>

<div class="toast"><svg width="22" height="26" viewBox="0 0 22 26"><circle cx="11" cy="13" r="9" fill="#e00" stroke="#fff" stroke-width="2.500"/></svg><span class="t1">New channel meeting</span><span class="t2">34:25</span></div>
</body>
</html>
```
FILE: styles.css
```css
* { box-sizing: border-box; }
body { margin: 0; width: 1920px; height: 1080px; overflow: hidden; font: 14px/16px "Liberation Sans", Arial, sans-serif; color: #000; }
svg { display: block; flex: none; overflow: visible; }
.sprite { position: absolute; }
.window { width: 1920px; height: 1080px; border: 4px solid #d8101f; display: flex; flex-direction: column; background: #fff; }

.titlebar { height: 41px; background: #2d5c86; color: #fff; display: flex; align-items: flex-start; }
.quick { width: 887px; display: flex; align-items: flex-start; }
.q-sep { width: 1px; height: 21px; background: #b8c6d4; margin: 0 10px 0 8px; }
.folder { margin-top: 1px; }
.save { margin-left: 12px; }
.undo { margin-left: 12px; }
.redo { margin-left: 12px; }
.custom { margin: 6px 0 0 25px; }
.caret { width: 0; height: 0; border: 3px solid transparent; border-top: 4px solid #000; border-bottom: 0; }
.quick .caret { margin: 9px 0 0 8px; }
.quick .white { border-top-color: #fff; }
.quick .dim { border-top-color: #9db0c2; }
.title { font-size: 14.8px; padding-top: 8px; white-space: nowrap; }
.controls { margin: 2px 5px 0 auto; }
.logo-s { font: 700 11px "Open Sans", sans-serif; fill: #fff; text-anchor: middle; }
.qmark { font: 700 15px "Liberation Sans", sans-serif; fill: #fff; text-anchor: middle; }

.tabs { height: 28px; background: #2d5c86; color: #f4f7fa; display: flex; align-items: stretch; white-space: nowrap; }
.tabs span { padding: 6px 14.85px 0; }
.tabs .file { width: 76px; padding: 5px 0 0 22px; }
.tabs .active { width: 71px; padding-left: 13.500px; background: #f0f0f0; color: #2d5c86; }
.help { margin: 2px 2px 0 auto; }

.ribbon { height: 111px; background: #f0f0f0; border-bottom: 1px solid #2d5c86; display: flex; padding-top: 3px; }
.group { height: 104px; border-right: 1px solid #c8c8c8; display: flex; flex-direction: column; justify-content: space-between; flex: none; }
.label { text-align: center; line-height: 16px; margin-top: auto; padding-left: 2px; }
.clip { width: 89px; }
.orient { width: 101px; }
.create { width: 308px; }
.modify { width: 98px; }
.constraints { width: 335px; }
.edit { width: 215px; }
.ends { width: 165px; }
.body { display: flex; }
.big { display: flex; flex-direction: column; align-items: center; text-align: center; white-space: nowrap; }
.paste { width: 58px; padding-top: 4px; }
.paste span { margin-top: 4px; }
.clip .stack { padding: 4px 0 0 2px; display: flex; flex-direction: column; gap: 7px; }
.rows { padding: 7px 0 0 9px; display: flex; flex-direction: column; gap: 6.5px; }
.rows div { display: flex; align-items: center; height: 20px; gap: 3px; white-space: nowrap; }
.rows .caret { margin-left: 14px; }
.rows .third { height: 18px; }
.rows .third .caret { margin: 4px 7px 0 8px; }
.off { color: #a3a3a3; }
.create .body { padding-left: 2px; }
.low { padding-top: 12px; }
.low svg { height: 40px; }
.low span { margin-top: 5px; }
.w52 { width: 52.500px; }
.w54 { width: 53.500px; }
.w66 { width: 66px; }
.w70 { width: 71px; }
.w80 { width: 79px; }
.w84 { width: 85px; }
.grid { display: grid; grid-auto-rows: 27px; align-items: center; justify-items: center; padding-top: 1px; }
.grid svg { width: 20px; height: 20px; }
.c4 { grid-template-columns: repeat(4, 31px); margin-left: -1px; }
.c3 { grid-template-columns: repeat(3, 30px); padding-left: 4px; }
.c5 { grid-template-columns: repeat(5, 31px); margin: 0 5px; }
.constraints .body { padding-left: 9px; }
.ln { fill: none; stroke: #969696; stroke-width: 1.800px; }
.info { font: 700 17px "DejaVu Serif", serif; text-anchor: middle; fill: #111; }
.edit .body { padding-left: 4px; }
.select { width: 51px; height: 82px; margin-top: 2px; border: 1px solid #b0b0b0; background: #c9c9c9; padding-top: 3px; }
.select span { margin-top: 3px; }
.select .caret { margin-top: 7px; }
.two { padding-top: 4px; }
.two svg { height: 42px; }
.two span { line-height: 15px; margin-top: 4px; }
.ends .body { padding-left: 2px; }

.work { display: flex; height: 809px; background: #fff; }
.left { width: 294px; display: flex; flex-direction: column; }
.head { height: 26px; background: #f7f7fc; width: 293px; display: flex; justify-content: space-between; align-items: center; padding: 0 7px 0 2px; }
.head svg { margin-bottom: 4px; }
.first { height: 29px; padding-top: 5px; }
.first svg { margin-bottom: 2px; }
.tree { height: 204px; list-style: none; margin: 0; padding: 3px 0 0; }
.tree li { height: 20px; display: flex; align-items: center; padding-left: 30px; }
.tree .root { height: 21px; padding: 0 0 1px 9px; font-weight: 700; letter-spacing: -.45px; white-space: nowrap; }
.tree .last { padding-bottom: 1px; }
.exp { width: 7px; margin-right: 7px; }
.root .exp { width: 9px; margin-right: 7px; }
.box { width: 16px; height: 16px; border: 1px solid #a0a0a0; margin-right: 5px; flex: none; color: #222; }
.root .box { margin-right: 4px; }
.soft { color: #aaa; }
.hot { border-color: #ffa81a; }
.tree span { padding: 2px 3px 1px; margin-left: 4px; line-height: 17px; }
.tree .root span { margin-left: 5px; }
.tree li > svg:nth-last-of-type(1) { width: 18px; }
.sel { background: #ffe874; }
.it { font-style: italic; letter-spacing: -.3px; }
.ptabs { height: 32px; background: #f7f7fc; display: flex; padding: 0 0 5px 2px; letter-spacing: -.06px; }
.ptabs span { padding: 7px 5px 0; line-height: 17px; }
.ptabs .on { background: #f0f0f0; color: #2d5c86; border: solid #2d5c86; border-width: 0 1px; padding: 7px 3.5px 0 4px; }
.opt { margin-top: 4px; padding-top: 1px; }
.blank { height: 241px; }
.props { height: 217px; margin-top: -1px; border: 1px solid #a0a0a0; border-left: 0; }
.ptabs.bottom { height: 31px; }
.ptabs.bottom span { padding-top: 6px; }
.doc { width: 1613px; margin-left: 5px; display: flex; flex-direction: column; }
.view { margin: 6px 0 0 3px; width: 1610px; height: 768px; border: 1px solid #aca899; box-shadow: inset 0 0 0 1px #f5f1de; }
.hint { font-size: 16.5px; fill: #707070; }
.ax { font: 700 15px "DejaVu Sans", sans-serif; text-anchor: middle; }
.mid { font-size: 13px; }
.small { font-size: 11px; }
.axz { font: 14px "DejaVu Sans", sans-serif; text-anchor: middle; }
.brand { font: 700 29px "Open Sans", sans-serif; fill: #4a4a4a; }
.rel { font: 17px Lato, sans-serif; fill: #4a4a4a; stroke: #4a4a4a; stroke-width: .2px; }
.strong { font-weight: 700; }
.acad { font: 14px Lato, sans-serif; fill: #4a4a4a; letter-spacing: 3px; }
.doctabs { margin-top: 3px; height: 32px; background: #f7f7fc; border: 1px solid #858585; border-width: 1px 0 0 1px; display: flex; justify-content: space-between; padding-left: 3px; }
.doctab { height: 26px; width: 223px; border: 1px solid #2d5c86; border-width: 0 1px 2px; color: #2d5c86; font-weight: 700; letter-spacing: -.42px; display: flex; align-items: center; padding-left: 4px; white-space: nowrap; }
.doctab span { margin: 3px 5px 0 5px; }
.nav { margin: 6px 0 0; }

.status { height: 37px; background: #2d5c86; color: #fff; display: flex; padding: 5px 0 2px; }
.status > div { border-right: 1px solid #8ba4ba; flex: none; }
.s-msg { width: 999px; padding: 7px 0 0 6px; letter-spacing: -.1px; }
.s-a { width: 153px; }
.s-b { width: 46px; display: flex; align-items: center; gap: 6px; padding-left: 8px; }
.s-c { width: 152px; text-align: center; padding-top: 7px; }
.s-tools { margin-left: 231px; }

.taskbar { height: 46px; background: linear-gradient(90deg, #cfe6ed, #d1e5ee 50%, #d3dfeb 72%, #d6dfeb); display: flex; align-items: stretch; font: 17px "Open Sans", "Noto Sans", sans-serif; }
.start { width: 56px; padding: 15px 0 0 16px; }
.search { width: 430px; background: #fff; border: 1px solid #c3ccd0; border-bottom: 0; display: flex; align-items: center; padding: 2px 0 0 14px; gap: 13px; color: #3a3a3a; }
.search span { font-size: 18px; letter-spacing: -.15px; }
.tb { display: flex; align-items: center; justify-content: center; padding-top: 2px; }
.w61 { width: 61.700px; flex: none; }
.tview { padding-right: 5px; }
.teams { background: #f5b07b; border-right: 1px solid #d89666; }
.cur { background: #ebf3f7; }
.tt { font: 700 13px "Open Sans", sans-serif; fill: #fff; text-anchor: middle; }
.tn { font: 700 15px "Open Sans", sans-serif; fill: #fff; text-anchor: middle; }
.lg { font: 700 16px "Open Sans", sans-serif; fill: #fff; text-anchor: middle; }
.weather { width: 196px; margin-left: 349px; display: flex; align-items: center; gap: 11px; white-space: nowrap; letter-spacing: -.3px; padding-top: 4px; }
.weather svg { margin-bottom: 2px; }
.tray { margin: 14px 0 0 16px; }
.eng { margin: 15px 0 0 20px; font-size: 15px; line-height: 22px; }
.clock { width: 80px; margin-left: 13px; display: flex; flex-direction: column; align-items: center; font-size: 14.500px; line-height: 23px; letter-spacing: -.2px; padding-top: 2px; }
.notice { margin: 14px 0 0 20px; }
.toast { position: absolute; left: 1426px; top: 1055px; width: 350px; height: 25px; background: #101010; color: #fff; overflow: hidden; display: flex; align-items: flex-start; padding: 10px 0 0 25px; box-shadow: 0 0 9px #0007; font: 17px "Open Sans", sans-serif; white-space: nowrap; }
.t1 { margin: 0 19px 0 9px; letter-spacing: -.25px; }
.t2 { font-size: 13.5px; margin-top: 3px; }
```
